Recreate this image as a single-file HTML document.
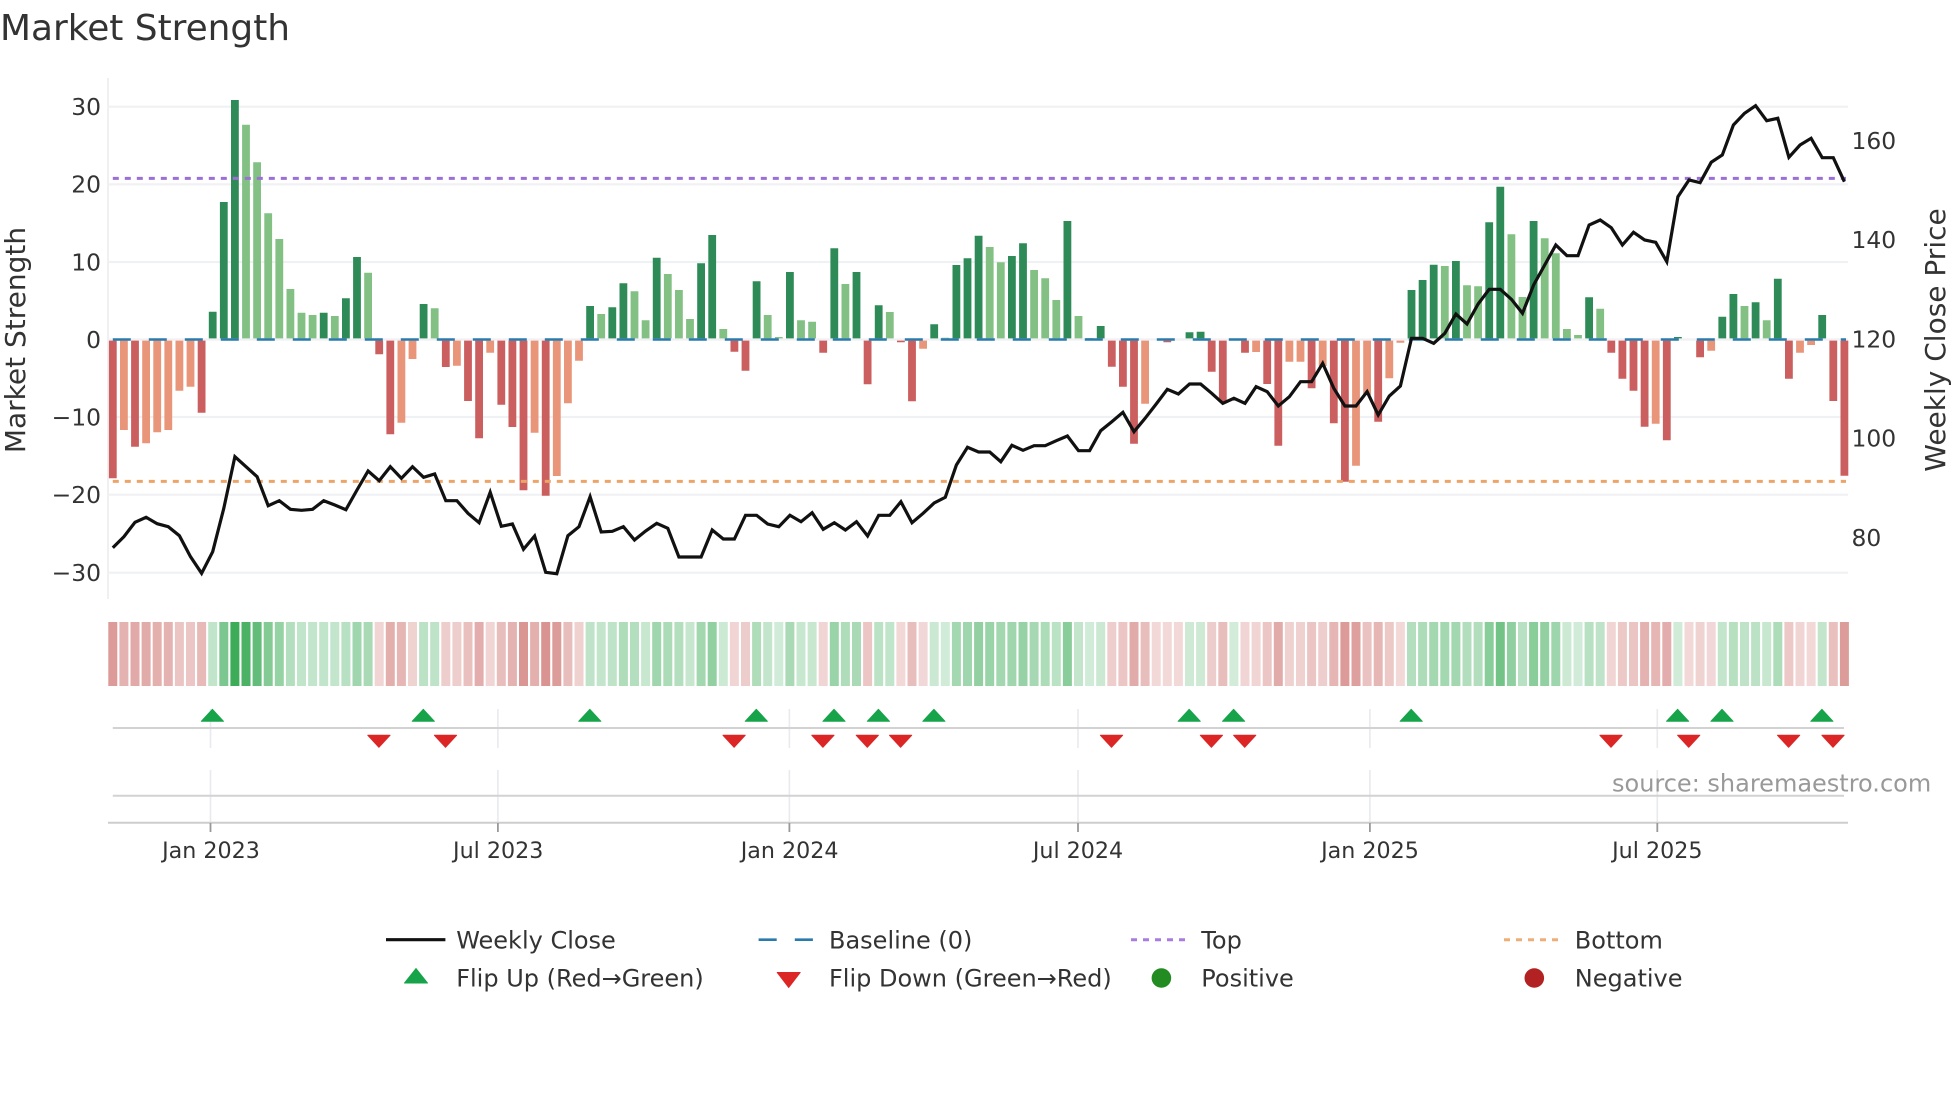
<!DOCTYPE html>
<html lang="en">
<head>
<meta charset="utf-8">
<title>Market Strength</title>
<style>
html,body{margin:0;padding:0;background:#fff;width:1960px;height:1102px;overflow:hidden}
svg{display:block}
text{font-family:"DejaVu Sans","Liberation Sans",sans-serif;fill:#333}
</style>
</head>
<body>
<svg width="1960" height="1102" viewBox="0 0 1960 1102" xmlns="http://www.w3.org/2000/svg">
<rect width="1960" height="1102" fill="#fff"/>
<text x="0" y="40" font-size="35.9">Market Strength</text>

<!-- grid -->
<path d="M108 78V599" stroke="#f0f0f0" stroke-width="2" fill="none"/>
<path d="M108 106.7H1848M108 184.4H1848M108 262H1848M108 339.5H1848M108 417H1848M108 494.7H1848M108 572.7H1848" stroke="#f0f1f4" stroke-width="2.2" fill="none"/>

<!-- bars -->
<path fill="none" stroke="#2e8b57" stroke-width="7.8" d="M212.7 338.4V311.7M223.8 338.4V202M234.9 338.4V100M323.7 338.4V312.7M345.9 338.4V298.3M357 338.4V257M423.6 338.4V304M590.1 338.4V306M612.3 338.4V307.3M623.4 338.4V283.3M656.7 338.4V257.7M701.1 338.4V263.3M712.2 338.4V235M756.6 338.4V281.3M789.9 338.4V272M834.3 338.4V248.3M856.5 338.4V272M878.7 338.4V305.3M934.2 338.4V324.3M956.4 338.4V265M967.5 338.4V258.3M978.6 338.4V235.7M1011.9 338.4V256M1023 338.4V243.3M1067.4 338.4V221M1100.7 338.4V326M1189.5 338.4V332.3M1200.6 338.4V331.7M1411.5 338.4V290M1422.6 338.4V280M1433.7 338.4V264.7M1455.9 338.4V261M1489.2 338.4V222.3M1500.3 338.4V186.7M1533.6 338.4V221M1589.1 338.4V297.3M1677.9 338.4V337M1722.3 338.4V316.7M1733.4 338.4V294M1755.6 338.4V302.3M1777.8 338.4V278.7M1822.2 338.4V315"/>
<path fill="none" stroke="#82c083" stroke-width="7.8" d="M246 338.4V124.7M257.1 338.4V162.3M268.2 338.4V213.3M279.3 338.4V239M290.4 338.4V289M301.5 338.4V312.7M312.6 338.4V315M334.8 338.4V316M368.1 338.4V272.7M434.7 338.4V308.3M601.2 338.4V314M634.5 338.4V291.3M645.6 338.4V320.3M667.8 338.4V274M678.9 338.4V290M690 338.4V319M723.3 338.4V329M767.7 338.4V315M778.8 338.4V337M801 338.4V320.3M812.1 338.4V321.7M845.4 338.4V284M889.8 338.4V312M945.3 338.4V337.7M989.7 338.4V247M1000.8 338.4V262.3M1034.1 338.4V270M1045.2 338.4V278.3M1056.3 338.4V300M1078.5 338.4V316M1089.6 338.4V338M1444.8 338.4V266M1467 338.4V285.3M1478.1 338.4V286.3M1511.4 338.4V234.3M1522.5 338.4V297M1544.7 338.4V238.3M1555.8 338.4V253.3M1566.9 338.4V329M1578 338.4V335M1600.2 338.4V308.7M1744.5 338.4V306M1766.7 338.4V320.3"/>
<path fill="none" stroke="#cb5e5e" stroke-width="7.8" d="M112.8 340.6V478.3M135 340.6V446.7M201.6 340.6V412.7M379.2 340.6V354.3M390.3 340.6V434.3M445.8 340.6V367M468 340.6V401M479.1 340.6V438.3M501.3 340.6V404.7M512.4 340.6V427M523.5 340.6V490.3M545.7 340.6V495.7M734.4 340.6V351.7M745.5 340.6V370.7M823.2 340.6V352.7M867.6 340.6V384.3M900.9 340.6V342.3M912 340.6V401.3M1111.8 340.6V366.7M1122.9 340.6V386.7M1134 340.6V443.7M1167.3 340.6V342.3M1211.7 340.6V371.7M1222.8 340.6V401.7M1245 340.6V352.7M1267.2 340.6V384M1278.3 340.6V445.7M1311.6 340.6V388.3M1333.8 340.6V423.3M1344.9 340.6V481.7M1378.2 340.6V421.7M1611.3 340.6V352.7M1622.4 340.6V378.7M1633.5 340.6V390.7M1644.6 340.6V426.7M1666.8 340.6V440.3M1700.1 340.6V357.3M1788.9 340.6V378.7M1833.3 340.6V401M1844.4 340.6V475.7"/>
<path fill="none" stroke="#e8957a" stroke-width="7.8" d="M123.9 340.6V430M146.1 340.6V443.3M157.2 340.6V432.3M168.3 340.6V430M179.4 340.6V390.7M190.5 340.6V386.7M401.4 340.6V422.7M412.5 340.6V359M456.9 340.6V365.7M490.2 340.6V352.7M534.6 340.6V432.7M556.8 340.6V476M567.9 340.6V403.3M579 340.6V360.7M923.1 340.6V348.7M1145.1 340.6V403.7M1256.1 340.6V352M1289.4 340.6V361.7M1300.5 340.6V361.7M1322.7 340.6V366M1356 340.6V465.7M1367.1 340.6V395M1389.3 340.6V378.3M1400.4 340.6V342.7M1655.7 340.6V423.7M1711.2 340.6V350.7M1800 340.6V352.7M1811.1 340.6V345"/>

<!-- reference lines -->
<path d="M112.8 339.5H1846" stroke="#2a7bad" stroke-width="2.6" stroke-dasharray="18 18" fill="none"/>
<path d="M112.8 178.4H1846" stroke="#9b6fd6" stroke-width="3" stroke-dasharray="6 6" fill="none"/>
<path d="M112.8 481.4H1846" stroke="#eda468" stroke-width="3" stroke-dasharray="6 6" fill="none"/>

<!-- weekly close -->
<polyline fill="none" stroke="#111" stroke-width="3.2" stroke-linejoin="miter" points="112.8,547.7 123.9,536.7 135,522.3 146.1,517.3 157.2,523.7 168.3,526.7 179.4,535.7 190.5,556.7 201.6,573.3 212.7,551.7 223.8,508.3 234.9,456.7 246,466.7 257.1,476.7 268.2,505.7 279.3,500.7 290.4,509.3 301.5,510.3 312.6,509.3 323.7,500.7 334.8,505 345.9,509.7 357,490 368.1,471 379.2,480.7 390.3,466.7 401.4,478.3 412.5,466.7 423.6,477.3 434.7,474 445.8,500.7 456.9,500.7 468,513.3 479.1,522.7 490.2,492.3 501.3,526.3 512.4,524 523.5,549.3 534.6,536 545.7,572.3 556.8,573.7 567.9,535.7 579,526.7 590.1,496.7 601.2,532 612.3,531.3 623.4,526.7 634.5,540 645.6,531 656.7,523.3 667.8,528.3 678.9,557 690,557 701.1,557 712.2,530 723.3,539 734.4,539 745.5,515.3 756.6,515.3 767.7,524 778.8,526.7 789.9,515.3 801,521.7 812.1,512.7 823.2,529.3 834.3,522.7 845.4,530 856.5,521.7 867.6,536 878.7,515.3 889.8,515.3 900.9,501.7 912,522.7 923.1,513.3 934.2,503 945.3,497.3 956.4,465 967.5,447.3 978.6,452 989.7,452 1000.8,461.7 1011.9,445.3 1023,450.3 1034.1,445.7 1045.2,445.7 1056.3,440.7 1067.4,436 1078.5,450.7 1089.6,450.7 1100.7,430.7 1111.8,421.7 1122.9,412.3 1134,431.7 1145.1,418.3 1156.2,404 1167.3,389.3 1178.4,394 1189.5,384 1200.6,384 1211.7,393.3 1222.8,403.3 1233.9,398.3 1245,403.3 1256.1,386.7 1267.2,391.7 1278.3,406 1289.4,396.7 1300.5,381.7 1311.6,381.7 1322.7,363.3 1333.8,388.3 1344.9,406 1356,406 1367.1,391.7 1378.2,415 1389.3,396 1400.4,386 1411.5,338.3 1422.6,338.3 1433.7,343.3 1444.8,333.3 1455.9,314 1467,324 1478.1,304 1489.2,289.3 1500.3,289.3 1511.4,299.3 1522.5,313.3 1533.6,285 1544.7,265 1555.8,245 1566.9,255.7 1578,255.7 1589.1,225 1600.2,220 1611.3,227.7 1622.4,245 1633.5,232.3 1644.6,240 1655.7,242.3 1666.8,261.7 1677.9,196.7 1689,180 1700.1,182.7 1711.2,162.3 1722.3,155 1733.4,125 1744.5,113.3 1755.6,105.7 1766.7,120.7 1777.8,118.3 1788.9,157.3 1800,145 1811.1,138.3 1822.2,157.7 1833.3,157.7 1844.4,181.7"/>

<!-- y labels -->
<g font-size="23.4" text-anchor="end">
<text x="101" y="115">30</text>
<text x="101" y="192.7">20</text>
<text x="101" y="270.4">10</text>
<text x="101" y="347.9">0</text>
<text x="101" y="425.4">−10</text>
<text x="101" y="503.1">−20</text>
<text x="101" y="581.1">−30</text>
</g>
<g font-size="23.4">
<text x="1851.5" y="149">160</text>
<text x="1851.5" y="248.2">140</text>
<text x="1851.5" y="347.5">120</text>
<text x="1851.5" y="446.7">100</text>
<text x="1851.5" y="545.9">80</text>
</g>
<text font-size="28" text-anchor="middle" transform="translate(25 340) rotate(-90)">Market Strength</text>
<text font-size="28" text-anchor="middle" transform="translate(1945 340) rotate(-90)">Weekly Close Price</text>

<!-- heat strip green -->
<g stroke="#21a041" stroke-width="9" fill="none">
<path opacity=".28" d="M212.7 622V686"/><path opacity=".59" d="M223.8 622V686"/><path opacity=".88" d="M234.9 622V686"/><path opacity=".81" d="M246 622V686"/><path opacity=".7" d="M257.1 622V686"/><path opacity=".56" d="M268.2 622V686"/><path opacity=".48" d="M279.3 622V686"/><path opacity=".34" d="M290.4 622V686"/>
<path opacity=".28" d="M301.5 622V686M323.7 622V686"/><path opacity=".27" d="M312.6 622V686M334.8 622V686"/><path opacity=".32" d="M345.9 622V686"/><path opacity=".43" d="M357 622V686"/><path opacity=".39" d="M368.1 622V686"/>
<path opacity=".3" d="M423.6 622V686"/><path opacity=".29" d="M434.7 622V686"/>
<path opacity=".29" d="M590.1 622V686M612.3 622V686"/><path opacity=".27" d="M601.2 622V686"/><path opacity=".36" d="M623.4 622V686"/><path opacity=".34" d="M634.5 622V686M678.9 622V686"/><path opacity=".25" d="M645.6 622V686"/><path opacity=".43" d="M656.7 622V686"/><path opacity=".38" d="M667.8 622V686"/><path opacity=".26" d="M690 622V686"/><path opacity=".42" d="M701.1 622V686"/><path opacity=".49" d="M712.2 622V686"/><path opacity=".23" d="M723.3 622V686"/>
<path opacity=".36" d="M756.6 622V686"/><path opacity=".27" d="M767.7 622V686"/><path opacity=".21" d="M778.8 622V686"/><path opacity=".39" d="M789.9 622V686"/><path opacity=".25" d="M801 622V686M812.1 622V686"/><path opacity=".46" d="M834.3 622V686"/><path opacity=".36" d="M845.4 622V686"/><path opacity=".39" d="M856.5 622V686"/><path opacity=".3" d="M878.7 622V686"/><path opacity=".28" d="M889.8 622V686"/>
<path opacity=".24" d="M934.2 622V686"/><path opacity=".21" d="M945.3 622V686"/><path opacity=".41" d="M956.4 622V686"/><path opacity=".43" d="M967.5 622V686M1011.9 622V686"/><path opacity=".49" d="M978.6 622V686"/><path opacity=".46" d="M989.7 622V686"/><path opacity=".42" d="M1000.8 622V686"/><path opacity=".47" d="M1023 622V686"/><path opacity=".4" d="M1034.1 622V686"/><path opacity=".37" d="M1045.2 622V686"/><path opacity=".31" d="M1056.3 622V686"/><path opacity=".53" d="M1067.4 622V686"/><path opacity=".27" d="M1078.5 622V686"/><path opacity=".21" d="M1089.6 622V686"/><path opacity=".24" d="M1100.7 622V686"/>
<path opacity=".22" d="M1189.5 622V686M1200.6 622V686"/><path opacity=".2" d="M1233.9 622V686"/>
<path opacity=".34" d="M1411.5 622V686"/><path opacity=".37" d="M1422.6 622V686"/><path opacity=".41" d="M1433.7 622V686M1444.8 622V686"/><path opacity=".42" d="M1455.9 622V686"/><path opacity=".35" d="M1467 622V686M1478.1 622V686"/><path opacity=".53" d="M1489.2 622V686M1533.6 622V686"/><path opacity=".63" d="M1500.3 622V686"/><path opacity=".5" d="M1511.4 622V686"/><path opacity=".32" d="M1522.5 622V686M1589.1 622V686"/><path opacity=".49" d="M1544.7 622V686"/><path opacity=".44" d="M1555.8 622V686"/><path opacity=".23" d="M1566.9 622V686"/><path opacity=".21" d="M1578 622V686M1677.9 622V686"/><path opacity=".29" d="M1600.2 622V686"/>
<path opacity=".27" d="M1722.3 622V686M1822.2 622V686"/><path opacity=".33" d="M1733.4 622V686"/><path opacity=".29" d="M1744.5 622V686"/><path opacity=".3" d="M1755.6 622V686"/><path opacity=".25" d="M1766.7 622V686"/><path opacity=".37" d="M1777.8 622V686"/>
</g>
<!-- heat strip red -->
<g stroke="#b52d28" stroke-width="9" fill="none">
<path opacity=".475" d="M112.8 622V686"/><path opacity=".37" d="M123.9 622V686M168.3 622V686"/><path opacity=".405" d="M135 622V686"/><path opacity=".4" d="M146.1 622V686"/><path opacity=".375" d="M157.2 622V686M534.6 622V686"/><path opacity=".28" d="M179.4 622V686"/><path opacity=".27" d="M190.5 622V686"/><path opacity=".33" d="M201.6 622V686"/>
<path opacity=".2" d="M379.2 622V686M490.2 622V686"/><path opacity=".38" d="M390.3 622V686"/><path opacity=".35" d="M401.4 622V686"/><path opacity=".21" d="M412.5 622V686"/><path opacity=".23" d="M445.8 622V686M456.9 622V686"/><path opacity=".3" d="M468 622V686"/><path opacity=".39" d="M479.1 622V686"/><path opacity=".31" d="M501.3 622V686M567.9 622V686"/><path opacity=".36" d="M512.4 622V686"/><path opacity=".5" d="M523.5 622V686"/><path opacity=".51" d="M545.7 622V686"/><path opacity=".47" d="M556.8 622V686"/><path opacity=".22" d="M579 622V686"/>
<path opacity=".2" d="M734.4 622V686M823.2 622V686"/><path opacity=".24" d="M745.5 622V686"/><path opacity=".27" d="M867.6 622V686"/><path opacity=".18" d="M900.9 622V686"/><path opacity=".31" d="M912 622V686"/><path opacity=".19" d="M923.1 622V686"/>
<path opacity=".23" d="M1111.8 622V686"/><path opacity=".27" d="M1122.9 622V686"/><path opacity=".4" d="M1134 622V686"/><path opacity=".31" d="M1145.1 622V686M1222.8 622V686"/><path opacity=".18" d="M1156.2 622V686M1167.3 622V686M1178.4 622V686"/><path opacity=".24" d="M1211.7 622V686"/><path opacity=".2" d="M1245 622V686M1256.1 622V686"/><path opacity=".27" d="M1267.2 622V686"/><path opacity=".4" d="M1278.3 622V686"/><path opacity=".22" d="M1289.4 622V686M1300.5 622V686"/><path opacity=".28" d="M1311.6 622V686"/><path opacity=".23" d="M1322.7 622V686"/><path opacity=".35" d="M1333.8 622V686M1378.2 622V686"/><path opacity=".48" d="M1344.9 622V686"/><path opacity=".45" d="M1356 622V686"/><path opacity=".29" d="M1367.1 622V686"/><path opacity=".26" d="M1389.3 622V686"/><path opacity=".18" d="M1400.4 622V686"/>
<path opacity=".2" d="M1611.3 622V686"/><path opacity=".26" d="M1622.4 622V686"/><path opacity=".28" d="M1633.5 622V686"/><path opacity=".36" d="M1644.6 622V686"/><path opacity=".35" d="M1655.7 622V686"/><path opacity=".39" d="M1666.8 622V686"/><path opacity=".18" d="M1689 622V686M1811.1 622V686"/><path opacity=".21" d="M1700.1 622V686"/><path opacity=".19" d="M1711.2 622V686"/><path opacity=".26" d="M1788.9 622V686"/><path opacity=".2" d="M1800 622V686"/><path opacity=".3" d="M1833.3 622V686"/><path opacity=".47" d="M1844.4 622V686"/>
</g>

<!-- vertical date grid -->
<path d="M210.5 709V748M497.9 709V748M789.4 709V748M1078 709V748M1369.9 709V748M1657.3 709V748M210.5 770V822M497.9 770V822M789.4 770V822M1078 770V822M1369.9 770V822M1657.3 770V822" stroke="#e8eaee" stroke-width="1.6" fill="none"/>
<path d="M112.8 728H1844M112.8 795.7H1844" stroke="#d2d2d2" stroke-width="2" fill="none"/>
<path d="M108 822.7H1848" stroke="#cdcdcd" stroke-width="2" fill="none"/>
<path d="M210.5 823V832M497.9 823V832M789.4 823V832M1078 823V832M1369.9 823V832M1657.3 823V832" stroke="#999" stroke-width="1.8" fill="none"/>

<!-- flip markers -->
<g fill="#16a34a" stroke="#16a34a" stroke-width="1" stroke-linejoin="round">
<path d="M212.4 709.3L223.5 721.3H201.3Z"/><path d="M423.3 709.3L434.4 721.3H412.2Z"/><path d="M589.8 709.3L600.9 721.3H578.7Z"/><path d="M756.3 709.3L767.4 721.3H745.2Z"/><path d="M834 709.3L845.1 721.3H822.9Z"/><path d="M878.4 709.3L889.5 721.3H867.3Z"/><path d="M933.9 709.3L945 721.3H922.8Z"/><path d="M1189.2 709.3L1200.3 721.3H1178.1Z"/><path d="M1233.6 709.3L1244.7 721.3H1222.5Z"/><path d="M1411.2 709.3L1422.3 721.3H1400.1Z"/><path d="M1677.6 709.3L1688.7 721.3H1666.5Z"/><path d="M1722 709.3L1733.1 721.3H1710.9Z"/><path d="M1821.9 709.3L1833 721.3H1810.8Z"/>
</g>
<g fill="#dc2626" stroke="#dc2626" stroke-width="1" stroke-linejoin="round">
<path d="M378.9 747.3L390 735.3H367.8Z"/><path d="M445.5 747.3L456.6 735.3H434.4Z"/><path d="M734.1 747.3L745.2 735.3H723Z"/><path d="M822.9 747.3L834 735.3H811.8Z"/><path d="M867.3 747.3L878.4 735.3H856.2Z"/><path d="M900.6 747.3L911.7 735.3H889.5Z"/><path d="M1111.5 747.3L1122.6 735.3H1100.4Z"/><path d="M1211.4 747.3L1222.5 735.3H1200.3Z"/><path d="M1244.7 747.3L1255.8 735.3H1233.6Z"/><path d="M1611 747.3L1622.1 735.3H1599.9Z"/><path d="M1688.7 747.3L1699.8 735.3H1677.6Z"/><path d="M1788.6 747.3L1799.7 735.3H1777.5Z"/><path d="M1833 747.3L1844.1 735.3H1821.9Z"/>
</g>

<text x="1612" y="791.7" font-size="24" style="fill:#999">source: sharemaestro.com</text>

<!-- x labels -->
<g font-size="22.2" text-anchor="middle">
<text x="211" y="857.8">Jan 2023</text>
<text x="498.2" y="857.8">Jul 2023</text>
<text x="789.6" y="857.8">Jan 2024</text>
<text x="1078" y="857.8">Jul 2024</text>
<text x="1370" y="857.8">Jan 2025</text>
<text x="1657.3" y="857.8">Jul 2025</text>
</g>

<!-- legend -->
<path d="M386 939.7H445.4" stroke="#111" stroke-width="3.2" fill="none"/>
<path d="M758.6 939.7H776.7M794.8 939.7H812.9" stroke="#2a7bad" stroke-width="2.6" fill="none"/>
<path d="M1131 939.7H1186" stroke="#a87ce0" stroke-width="3" stroke-dasharray="6 6" fill="none"/>
<path d="M1504 939.7H1559" stroke="#eeae78" stroke-width="3" stroke-dasharray="6 6" fill="none"/>
<path d="M416 968.5L427.5 983H404.5Z" fill="#16a34a" stroke="#16a34a" stroke-width="1" stroke-linejoin="round"/>
<path d="M788.7 987.5L800.2 972.5H777.2Z" fill="#dc2626" stroke="#dc2626" stroke-width="1" stroke-linejoin="round"/>
<circle cx="1161.4" cy="978" r="9.8" fill="#228b22"/>
<circle cx="1534.3" cy="978" r="9.8" fill="#b22222"/>
<g font-size="24">
<text x="456.2" y="948.3">Weekly Close</text>
<text x="829" y="948.3">Baseline (0)</text>
<text x="1201.3" y="948.3">Top</text>
<text x="1574.8" y="948.3">Bottom</text>
<text x="456.2" y="986.7">Flip Up (Red→Green)</text>
<text x="829" y="986.7">Flip Down (Green→Red)</text>
<text x="1201.3" y="986.7">Positive</text>
<text x="1574.8" y="986.7">Negative</text>
</g>
</svg>
</body>
</html>
